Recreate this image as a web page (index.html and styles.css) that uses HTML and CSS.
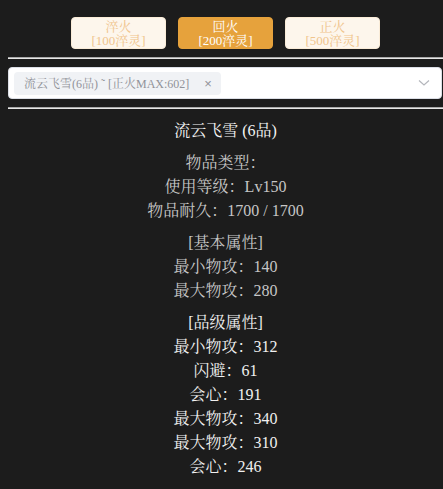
FILE: index.html
```html
<!DOCTYPE html>
<html lang="zh-CN">
<head>
<meta charset="utf-8">
<title>强化</title>
<link rel="stylesheet" href="styles.css">
</head>
<body>
<div class="page">
  <div class="tabs">
    <button class="tab">淬火<br>[100淬灵]</button>
    <button class="tab active">回火<br>[200淬灵]</button>
    <button class="tab">正火<br>[500淬灵]</button>
  </div>
  <div class="rule"></div>
  <div class="select">
    <span class="tag">流云飞雪(6品) ˜ [正火MAX:602]<span class="tag-close">×</span></span>
    <svg class="chevron" width="12" height="8" viewBox="0 0 12 8"><path d="M1 1.5 L6 6 L11 1.5" fill="none" stroke="#b4b6bc" stroke-width="1.2"/></svg>
  </div>
  <div class="rule"></div>
  <div class="detail">
    <div class="title">流云飞雪 (6品)</div>
    <div class="section">
      <div>物品类型：</div>
      <div>使用等级：Lv150</div>
      <div>物品耐久：1700 / 1700</div>
    </div>
    <div class="section">
      <div>[基本属性]</div>
      <div>最小物攻：140</div>
      <div>最大物攻：280</div>
    </div>
    <div class="section bright">
      <div>[品级属性]</div>
      <div>最小物攻：312</div>
      <div>闪避：61</div>
      <div>会心：191</div>
      <div>最大物攻：340</div>
      <div>最大物攻：310</div>
      <div>会心：246</div>
    </div>
  </div>
</div>
</body>
</html>
```

FILE: styles.css
```css
html, body {
  margin: 0;
  padding: 0;
  background: #1c1c1c;
  overflow: hidden;
}
.page {
  padding: 17px 0 0 8px;
  font-family: "Liberation Serif", "Noto Serif CJK SC", "Noto Sans CJK SC", serif;
}
.tabs {
  display: flex;
  justify-content: center;
  gap: 12px;
}
.tab {
  width: 95px;
  height: 32px;
  padding: 1px 0 0 0;
  margin: 0;
  border: 1px solid #faecd8;
  border-radius: 4px;
  background: #fdf6ec;
  color: #f0c58c;
  font-family: "Liberation Serif", "Noto Serif CJK SC", "Noto Sans CJK SC", serif;
  font-size: 13px;
  line-height: 14px;
}
.tab.active {
  background: #e6a23c;
  border-color: #e6a23c;
  color: #ffffff;
}
.rule {
  height: 0;
  border-top: 1px solid #a8a8a8;
  border-bottom: 1px solid #e6e6e6;
  margin: 8px 0 8px 0;
}
.select {
  box-sizing: border-box;
  width: 434px;
  height: 32px;
  margin-top: 1px;
  background: #ffffff;
  border: 1px solid #dcdfe6;
  border-radius: 4px;
  display: flex;
  align-items: center;
  padding: 0 11px 0 5px;
}
.tag {
  display: inline-flex;
  align-items: center;
  height: 23px;
  padding: 0 9px 0 10px;
  background: #f0f2f5;
  border-radius: 4px;
  color: #909399;
  font-size: 12px;
  white-space: nowrap;
}
.tag-close {
  margin-left: 15px;
  font-family: "Liberation Sans", sans-serif;
  font-size: 13px;
}
.chevron {
  margin-left: auto;
}
.detail {
  text-align: center;
  font-size: 16px;
  line-height: 24px;
  color: #c6c6c6;
  padding-top: 2px;
}
.title {
  color: #f4f4f4;
  margin-bottom: 7px;
}
.section {
  margin-top: 8px;
}
.section:first-of-type {
  margin-top: 0;
}
.bright {
  color: #f0f0f0;
}
```
